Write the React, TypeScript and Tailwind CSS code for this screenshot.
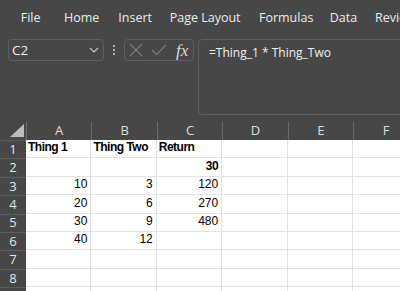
import React from "react";

const COLS = ["A", "B", "C", "D", "E", "F"];
type Cell = { v: string; bold?: boolean; right?: boolean };
const ROWS: (Cell | null)[][] = [
  [{ v: "Thing 1", bold: true }, { v: "Thing Two", bold: true }, { v: "Return", bold: true }],
  [null, null, { v: "30", bold: true, right: true }],
  [{ v: "10", right: true }, { v: "3", right: true }, { v: "120", right: true }],
  [{ v: "20", right: true }, { v: "6", right: true }, { v: "270", right: true }],
  [{ v: "30", right: true }, { v: "9", right: true }, { v: "480", right: true }],
  [{ v: "40", right: true }, { v: "12", right: true }, null],
  [],
  [],
  [],
];

const menu: [string, string][] = [
  ["File", "w-[43.3px]"],
  ["Home", "w-[54.3px]"],
  ["Insert", "w-[51.4px]"],
  ["Page Layout", "w-[89.3px]"],
  ["Formulas", "w-[70.7px]"],
  ["Data", "w-[45.3px]"],
  ["Review", "w-[60px]"],
];

export default function App() {
  const ui = { fontFamily: '"Open Sans", "Noto Sans", sans-serif' };
  const cellFont = { fontFamily: '"Liberation Sans", Arial, sans-serif' };
  return (
    <div className="w-[400px] h-[291px] overflow-hidden bg-[#474747] flex flex-col" style={ui}>
      {/* Menu */}
      <div className="h-[37px] flex items-center pl-[20.7px] text-[12.5px] text-[#ececec] whitespace-nowrap shrink-0">
        {menu.map(([m, w]) => (
          <span key={m} className={`${w} shrink-0`}>{m}</span>
        ))}
      </div>
      {/* Formula row */}
      <div className="flex pl-[8px] mt-[2px] h-[76px] shrink-0">
        <div className="w-[96px] h-[22px] border border-[#5f5f5f] rounded-[4px] flex items-center justify-between pl-[3px] pr-[4px] text-[13.5px] text-[#f0f0f0]">
          <span>C2</span>
          <svg width="10" height="6" viewBox="0 0 10 6" fill="none">
            <path d="M1 1 L5 5 L9 1" stroke="#c8c8c8" strokeWidth="1.2" />
          </svg>
        </div>
        <div className="w-[20px] h-[22px] flex flex-col items-center justify-center gap-[2px]">
          <span className="w-[2px] h-[2px] bg-[#d0d0d0] rounded-full"></span>
          <span className="w-[2px] h-[2px] bg-[#d0d0d0] rounded-full"></span>
          <span className="w-[2px] h-[2px] bg-[#d0d0d0] rounded-full"></span>
        </div>
        <div className="w-[70px] h-[22px] border border-[#5f5f5f] rounded-[4px] flex items-center pl-[4px]">
          <svg width="14" height="14" viewBox="0 0 14 14" fill="none">
            <path d="M1 1 L13 13 M13 1 L1 13" stroke="#7c7c7c" strokeWidth="1.1" />
          </svg>
          <svg width="16" height="12" viewBox="0 0 16 12" fill="none" className="ml-[8px]">
            <path d="M1 6 L5.5 10.5 L15 1" stroke="#7c7c7c" strokeWidth="1.1" />
          </svg>
          <span
            className="ml-[9px] text-[17px] italic text-[#dcdcdc] leading-none"
            style={{ fontFamily: '"Liberation Serif", "Times New Roman", serif' }}
          >
            fx
          </span>
        </div>
        <div className="ml-[4px] flex-1 h-[76px] border border-[#5f5f5f] border-r-0 rounded-l-[5px] pl-[10px] pt-[4px] text-[12px] text-[#f0f0f0]">
          =Thing_1 * Thing_Two
        </div>
      </div>
      {/* Grid */}
      <div className="mt-[7px] shrink-0" style={cellFont}>
        {/* column header */}
        <div className="flex h-[18px]">
          <div className="w-[26px] shrink-0 relative">
            <svg width="26" height="18" viewBox="0 0 26 18" className="absolute left-0 top-0">
              <polygon points="24,2 24,15 10,15" fill="#bdbdbd" />
            </svg>
          </div>
          {COLS.map((c) => (
            <div
              key={c}
              className="w-[65.4px] shrink-0 border-l border-[#6a6a6a] flex items-center justify-center text-[13px] text-[#dedede]"
              style={ui}
            >
              {c}
            </div>
          ))}
        </div>
        {ROWS.map((row, ri) => (
          <div key={ri} className="flex h-[18.375px]">
            <div
              className="w-[26px] shrink-0 border-t border-[#5c5c5c] flex items-center justify-center text-[13px] text-[#e6e6e6]"
              style={ui}
            >
              {ri + 1}
            </div>
            {COLS.map((c, ci) => {
              const cell = row[ci];
              return (
                <div
                  key={c}
                  className={`w-[65.4px] shrink-0 bg-white border-r border-b border-[#e2e2e2] flex items-end pb-[1px] text-[12px] text-black whitespace-nowrap overflow-visible ${
                    cell?.right ? "justify-end pr-[3px]" : "justify-start pl-[2px]"
                  } ${cell?.bold ? "font-bold tracking-[-0.5px]" : ""}`}
                >
                  {cell?.v ?? ""}
                </div>
              );
            })}
          </div>
        ))}
      </div>
    </div>
  );
}
